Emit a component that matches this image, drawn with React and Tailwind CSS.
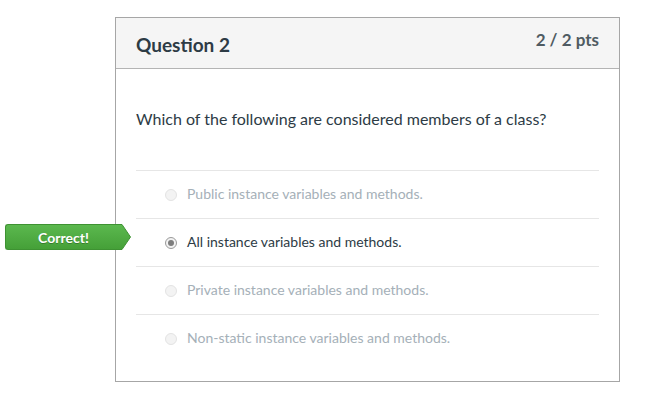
const answers = [
  { text: "Public instance variables and methods.", selected: false },
  { text: "All instance variables and methods.", selected: true, correct: true },
  { text: "Private instance variables and methods.", selected: false },
  { text: "Non-static instance variables and methods.", selected: false },
];

const Radio = ({ checked }) => (
  <span
    className={
      "w-[12px] h-[12px] rounded-full flex items-center justify-center flex-shrink-0 " +
      (checked ? "border border-[#9a9a9a] bg-[#f2f2f2]" : "border border-[#e3e3e3] bg-[#f3f3f3]")
    }
  >
    {checked && <span className="w-[6px] h-[6px] rounded-full bg-[#7d7d7d]" />}
  </span>
);

const CorrectTag = () => (
  <div className="absolute right-full mr-[5px] top-[5px] flex items-center">
    <div className="h-[26px] w-[116px] rounded-l-[3px] bg-gradient-to-b from-[#5bb84e] to-[#45a038] border border-r-0 border-[#3e9232] flex items-center justify-center text-white text-[14px] font-bold [text-shadow:0_1px_0_rgba(0,0,0,0.25)]">
      Correct!
    </div>
    <svg width="10" height="26" viewBox="0 0 10 26" className="block">
      <defs>
        <linearGradient id="tagGrad" x1="0" y1="0" x2="0" y2="1">
          <stop offset="0" stopColor="#5bb84e" />
          <stop offset="1" stopColor="#45a038" />
        </linearGradient>
      </defs>
      <path d="M0 0.5 L1 0.5 L9.5 13 L1 25.5 L0 25.5 Z" fill="url(#tagGrad)" stroke="#3e9232" strokeWidth="1" />
      <rect x="0" y="1" width="1" height="24" fill="url(#tagGrad)" />
    </svg>
  </div>
);

export default function App() {
  return (
    <div className="min-h-screen bg-white pl-[115px] pt-[17px] font-['Lato',sans-serif]">
      <div className="w-[505px] h-[365px] border border-[#a6a6a6] bg-white">
        {/* Header */}
        <div className="h-[51px] bg-[#f5f5f5] border-b border-[#b4b4b4] flex justify-between px-[20px]">
          <h2 className="text-[19px] font-bold text-[#2d3b45] pt-[15px] leading-[24px]">Question 2</h2>
          <span className="text-[17px] font-bold text-[#4f5b62] pt-[10px] leading-[24px]">2 / 2 pts</span>
        </div>

        {/* Body */}
        <div className="px-[20px] pt-[38px]">
          <p className="text-[16px] leading-[24px] text-[#2d3b45]">
            Which of the following are considered members of a class?
          </p>
          <div className="mt-[39px]">
            {answers.map((a) => (
              <div key={a.text} className="relative h-[48px] border-t border-[#e6e6e6] flex items-center pl-[29px] gap-[10px]">
                {a.correct && <CorrectTag />}
                <Radio checked={a.selected} />
                <span className={"relative top-[-1px] text-[14px] " + (a.selected ? "text-[#2d3b45]" : "text-[#a5b0b8]")}>{a.text}</span>
              </div>
            ))}
          </div>
        </div>
      </div>
    </div>
  );
}
